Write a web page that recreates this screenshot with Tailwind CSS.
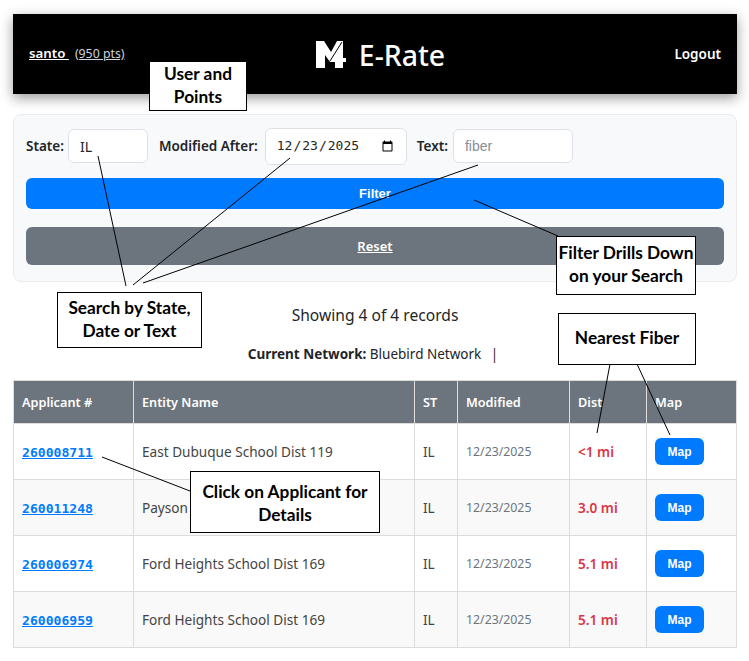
<!DOCTYPE html>
<html lang="en">
<head>
  <meta charset="UTF-8">
  <title>E-Rate</title>
  <script src="https://cdn.jsdelivr.net/npm/@tailwindcss/browser@4"></script>
</head>
<body class="relative h-[661px] overflow-hidden bg-white px-[13px] pt-[14px] font-['Noto_Sans','Open_Sans',sans-serif] text-[14px] text-[#212529]">

  <!-- header -->
  <header class="flex h-[80px] w-[724px] items-center justify-between bg-black px-[16px] text-white shadow-[0_4px_12px_rgba(0,0,0,0.4)]">
    <div class="flex w-[200px] items-center text-[13.3px]">
      <a href="#" class="font-semibold whitespace-pre underline">santo </a>
      <a href="#" class="ml-[6px] text-[12.3px] text-gray-300 underline">(950 pts)</a>
    </div>
    <div class="ml-[11px] flex items-center gap-[12px]">
      <svg width="31" height="27" viewBox="0 0 31 27"><path fill="#fff" d="M0 0H8L15 11 21 0H27V17H30V21H27V27H19V21H14L9 14V27H0Z"/><path stroke="#000" stroke-width="1" fill="none" d="M26 1 14 20"/></svg>
      <span class="pt-[2px] text-[28.4px] leading-none font-medium">E-Rate</span>
    </div>
    <a href="#" class="flex w-[200px] justify-end text-[13.5px] font-semibold">Logout</a>
  </header>

  <!-- filter card -->
  <form class="mt-[20px] flex h-[168px] w-[724px] flex-col rounded-lg border border-[#e9ecef] bg-[#f8f9fa] px-[12px] pt-[12px]">
    <div class="flex h-[38px] items-center">
      <label class="text-[13.5px] font-semibold">State:</label>
      <input value="IL" class="ml-[4px] h-[34px] w-[80px] rounded-md border border-[#dee2e6] bg-white px-[11px] text-[14px]">
      <label class="ml-[11px] text-[13.5px] font-semibold">Modified After:</label>
      <input type="date" value="2025-12-23" class="ml-[7px] h-[37px] w-[142px] rounded-md border border-[#dee2e6] bg-white px-[10px] font-['DejaVu_Sans_Mono',monospace] text-[13px]">
      <label class="ml-[10px] text-[13.5px] font-semibold">Text:</label>
      <input placeholder="fiber" class="ml-[5px] h-[34px] w-[120px] rounded-md border border-[#dee2e6] bg-white px-[11px] font-['Liberation_Sans',sans-serif] text-[14px] placeholder:text-[#868e96]">
    </div>
    <button type="button" class="mt-[13px] h-[31px] w-full rounded-md bg-[#007bff] font-['Liberation_Sans',sans-serif] text-[13px] font-bold text-white">Filter</button>
    <a href="#" class="mt-[18px] flex h-[38px] w-full items-center justify-center rounded-md bg-[#6c757d] pt-[1px] text-[13px] font-semibold text-white underline">Reset</a>
  </form>

  <p class="mt-[22px] w-[724px] text-center text-[15.6px] leading-[22px]">Showing 4 of 4 records</p>
  <p class="mt-[17px] w-[724px] pr-[4px] text-center text-[13.5px] leading-[22px]"><b class="font-bold">Current Network:</b> Bluebird Network <span class="ml-[6px] text-[#3a2a1e]">|</span></p>

  <!-- results -->
  <table class="mt-[15px] w-[723px] table-fixed border-collapse text-[13.6px]">
    <colgroup>
      <col class="w-[120px]"><col class="w-[281px]"><col class="w-[43px]"><col class="w-[112px]"><col class="w-[77px]"><col class="w-[90px]">
    </colgroup>
    <thead class="bg-[#6c757d] text-left text-[12.7px] text-white">
      <tr class="h-[43px]">
        <th class="border border-[#dcdcdc] px-[8px] pt-[2px] font-semibold">Applicant #</th>
        <th class="border border-[#dcdcdc] px-[8px] pt-[2px] font-semibold">Entity Name</th>
        <th class="border border-[#dcdcdc] px-[8px] pt-[2px] font-semibold">ST</th>
        <th class="border border-[#dcdcdc] px-[8px] pt-[2px] font-semibold">Modified</th>
        <th class="border border-[#dcdcdc] px-[8px] pt-[2px] font-semibold">Dist</th>
        <th class="border border-[#dcdcdc] px-[8px] pt-[2px] font-semibold">Map</th>
      </tr>
    </thead>
    <tbody class="text-[#444]">
      <tr class="h-[56px]">
        <td class="border border-[#dcdcdc] px-[8px] pt-[2px]"><a href="#" class="font-['DejaVu_Sans_Mono',monospace] text-[13.1px] font-bold text-[#007bff] underline">260008711</a></td>
        <td class="border border-[#dcdcdc] px-[8px] pt-[2px]">East Dubuque School Dist 119</td>
        <td class="border border-[#dcdcdc] px-[8px] pt-[2px]">IL</td>
        <td class="border border-[#dcdcdc] px-[8px] pt-[2px] text-[12.3px] text-[#6c757d]">12/23/2025</td>
        <td class="border border-[#dcdcdc] px-[8px] pt-[2px] font-semibold text-[#dc3545]">&lt;1 mi</td>
        <td class="border border-[#dcdcdc] px-[8px]"><a href="#" class="flex h-[27px] w-[49px] items-center justify-center rounded-md bg-[#007bff] font-['Liberation_Sans',sans-serif] text-[12px] font-bold text-white">Map</a></td>
      </tr>
      <tr class="h-[56px] bg-[#f9f9f9]">
        <td class="border border-[#dcdcdc] px-[8px] pt-[2px]"><a href="#" class="font-['DejaVu_Sans_Mono',monospace] text-[13.1px] font-bold text-[#007bff] underline">260011248</a></td>
        <td class="border border-[#dcdcdc] px-[8px] pt-[2px]">Payson</td>
        <td class="border border-[#dcdcdc] px-[8px] pt-[2px]">IL</td>
        <td class="border border-[#dcdcdc] px-[8px] pt-[2px] text-[12.3px] text-[#6c757d]">12/23/2025</td>
        <td class="border border-[#dcdcdc] px-[8px] pt-[2px] font-semibold text-[#dc3545]">3.0 mi</td>
        <td class="border border-[#dcdcdc] px-[8px]"><a href="#" class="flex h-[27px] w-[49px] items-center justify-center rounded-md bg-[#007bff] font-['Liberation_Sans',sans-serif] text-[12px] font-bold text-white">Map</a></td>
      </tr>
      <tr class="h-[56px]">
        <td class="border border-[#dcdcdc] px-[8px] pt-[2px]"><a href="#" class="font-['DejaVu_Sans_Mono',monospace] text-[13.1px] font-bold text-[#007bff] underline">260006974</a></td>
        <td class="border border-[#dcdcdc] px-[8px] pt-[2px]">Ford Heights School Dist 169</td>
        <td class="border border-[#dcdcdc] px-[8px] pt-[2px]">IL</td>
        <td class="border border-[#dcdcdc] px-[8px] pt-[2px] text-[12.3px] text-[#6c757d]">12/23/2025</td>
        <td class="border border-[#dcdcdc] px-[8px] pt-[2px] font-semibold text-[#dc3545]">5.1 mi</td>
        <td class="border border-[#dcdcdc] px-[8px]"><a href="#" class="flex h-[27px] w-[49px] items-center justify-center rounded-md bg-[#007bff] font-['Liberation_Sans',sans-serif] text-[12px] font-bold text-white">Map</a></td>
      </tr>
      <tr class="h-[56px] bg-[#f9f9f9]">
        <td class="border border-[#dcdcdc] px-[8px] pt-[2px]"><a href="#" class="font-['DejaVu_Sans_Mono',monospace] text-[13.1px] font-bold text-[#007bff] underline">260006959</a></td>
        <td class="border border-[#dcdcdc] px-[8px] pt-[2px]">Ford Heights School Dist 169</td>
        <td class="border border-[#dcdcdc] px-[8px] pt-[2px]">IL</td>
        <td class="border border-[#dcdcdc] px-[8px] pt-[2px] text-[12.3px] text-[#6c757d]">12/23/2025</td>
        <td class="border border-[#dcdcdc] px-[8px] pt-[2px] font-semibold text-[#dc3545]">5.1 mi</td>
        <td class="border border-[#dcdcdc] px-[8px]"><a href="#" class="flex h-[27px] w-[49px] items-center justify-center rounded-md bg-[#007bff] font-['Liberation_Sans',sans-serif] text-[12px] font-bold text-white">Map</a></td>
      </tr>
    </tbody>
  </table>

  <!-- annotations drawn on top of the screenshot -->
  <svg class="absolute top-0 left-0" width="749" height="661" fill="none" stroke="#000" stroke-width="1">
    <path d="M98 156 126 286M290 158 133 285M478 165 143 283M474 200 558 236M610 364 597 433M637 364 670 435M102 457 190 491"/>
  </svg>
  <div class="absolute top-[61px] left-[149px] flex h-[50px] w-[98px] items-center justify-center border border-black bg-white pb-[2px] text-center font-['Lato',sans-serif] text-[17.3px] leading-[23px] font-bold text-black">User and<br>Points</div>
  <div class="absolute top-[292px] left-[57px] flex h-[56px] w-[145px] items-center justify-center border border-black bg-white pb-[3px] text-center font-['Lato',sans-serif] text-[17.3px] leading-[23px] font-bold text-black">Search by State,<br>Date or Text</div>
  <div class="absolute top-[236px] left-[556px] flex h-[59px] w-[140px] items-center justify-center border border-black bg-white pb-[3px] text-center font-['Lato',sans-serif] text-[17.3px] leading-[23px] font-bold text-black">Filter Drills Down<br>on your Search</div>
  <div class="absolute top-[313px] left-[558px] flex h-[52px] w-[138px] items-center justify-center border border-black bg-white pb-[3px] text-center font-['Lato',sans-serif] text-[17.3px] leading-[23px] font-bold text-black">Nearest Fiber</div>
  <div class="absolute top-[471px] left-[190px] flex h-[62px] w-[190px] items-center justify-center border border-black bg-white pt-[1px] text-center font-['Lato',sans-serif] text-[17.3px] leading-[23px] font-bold text-black">Click on Applicant for<br>Details</div>
</body>
</html>
